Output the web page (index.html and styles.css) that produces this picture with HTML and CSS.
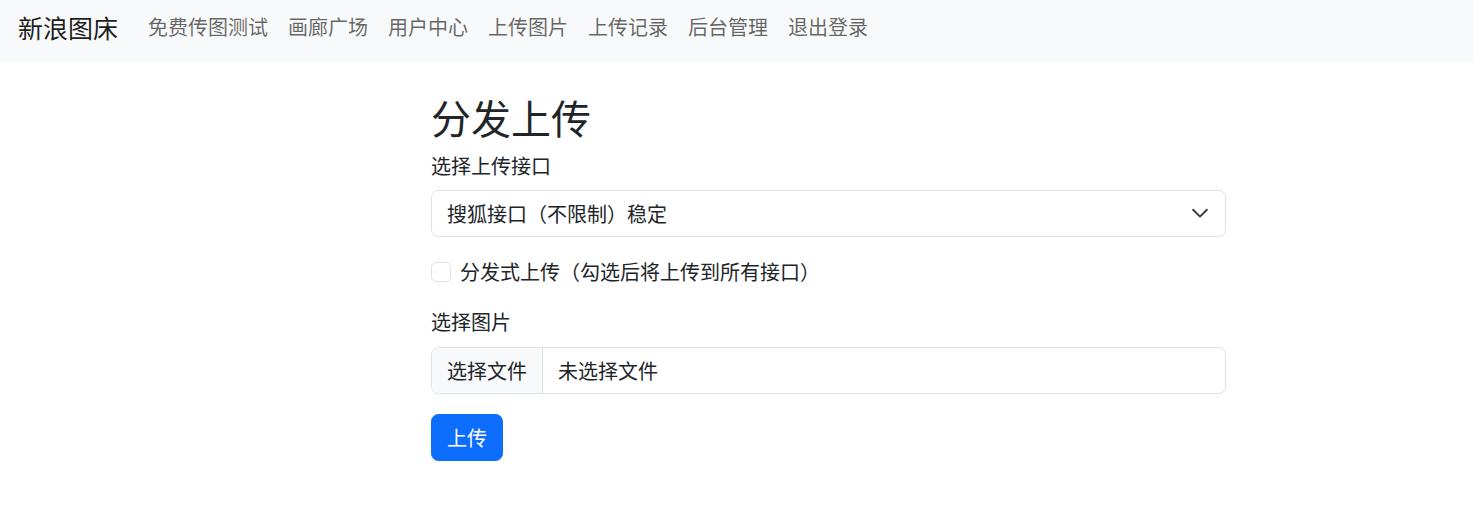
FILE: index.html
```html
<!DOCTYPE html>
<html lang="zh-CN">
<head>
<meta charset="utf-8">
<title>分发上传</title>
<link rel="stylesheet" href="styles.css">
</head>
<body>
<nav class="navbar">
  <a class="brand" href="#">新浪图床</a>
  <ul class="nav">
    <li><a class="nav-link" href="#">免费传图测试</a></li>
    <li><a class="nav-link" href="#">画廊广场</a></li>
    <li><a class="nav-link" href="#">用户中心</a></li>
    <li><a class="nav-link" href="#">上传图片</a></li>
    <li><a class="nav-link" href="#">上传记录</a></li>
    <li><a class="nav-link" href="#">后台管理</a></li>
    <li><a class="nav-link" href="#">退出登录</a></li>
  </ul>
</nav>
<main class="content">
  <h2 class="title">分发上传</h2>
  <label class="form-label">选择上传接口</label>
  <div class="select">
    <span class="select-text">搜狐接口（不限制）稳定</span>
    <svg class="chevron" width="20" height="15" viewBox="0 0 16 12" aria-hidden="true"><path d="M2.5 5l5.5 5.5 5.5-5.5" fill="none" stroke="#343a40" stroke-width="1.5" stroke-linecap="round" stroke-linejoin="round" transform="translate(0,-2)"/></svg>
  </div>
  <div class="form-check">
    <span class="check-box"></span>
    <label class="check-label">分发式上传（勾选后将上传到所有接口）</label>
  </div>
  <label class="form-label">选择图片</label>
  <div class="file-input">
    <span class="file-btn">选择文件</span>
    <span class="file-name">未选择文件</span>
  </div>
  <button class="btn-primary" type="button">上传</button>
</main>
</body>
</html>
```

FILE: styles.css
```css
* { box-sizing: border-box; }
html, body { margin: 0; padding: 0; }
body {
  font-family: "Noto Sans CJK SC", "Noto Sans", "Liberation Sans", sans-serif;
  font-size: 20px;
  line-height: 30px;
  color: #212529;
  background: #fff;
}
.navbar {
  height: 62px;
  background: #f8f9fa;
  display: flex;
  align-items: flex-start;
  padding: 11px 0 0 18px;
}
.brand {
  font-size: 25px;
  line-height: 32px;
  color: rgba(0,0,0,.9);
  text-decoration: none;
  margin-right: 20px;
}
.nav {
  list-style: none;
  margin: 0;
  padding: 0;
  display: flex;
}
.nav-link {
  display: block;
  padding: 1px 10px;
  font-size: 20px;
  line-height: 30px;
  color: rgba(0,0,0,.6);
  text-decoration: none;
}
.content {
  width: 795px;
  margin-left: 431px;
  display: flex;
  flex-direction: column;
  align-items: flex-start;
}
.title {
  margin: 31px 0 10px;
  font-size: 40px;
  line-height: 48px;
  font-weight: 400;
}
.form-label {
  display: block;
  margin-bottom: 9px;
}
.form-label + .file-input { margin-top: 1px; }
.select {
  width: 100%;
  height: 47px;
  border: 1px solid #dee2e6;
  border-radius: 7.5px;
  display: flex;
  align-items: center;
  justify-content: space-between;
  padding: 0 15px 0 15px;
  margin-bottom: 20px;
}
.chevron { display: block; }
.form-check {
  display: flex;
  align-items: flex-start;
  margin-bottom: 20px;
  height: 30px;
}
.check-box {
  width: 20px;
  height: 20px;
  margin-top: 5px;
  border: 1px solid #dee2e6;
  border-radius: 5px;
  background: #fff;
}
.check-label { margin-left: 9px; }
.file-input {
  width: 100%;
  height: 47px;
  border: 1px solid #dee2e6;
  border-radius: 7.5px;
  display: flex;
  overflow: hidden;
  margin-bottom: 20px;
}
.file-btn {
  background: #f8f9fa;
  border-right: 1px solid #dee2e6;
  padding: 0 15px;
  display: flex;
  align-items: center;
}
.file-name {
  padding: 0 15px;
  display: flex;
  align-items: center;
}
.btn-primary {
  font: inherit;
  color: #fff;
  background: #0d6efd;
  border: 1px solid #0d6efd;
  border-radius: 7.5px;
  height: 47px;
  padding: 0 15px;
  line-height: 30px;
}
```
